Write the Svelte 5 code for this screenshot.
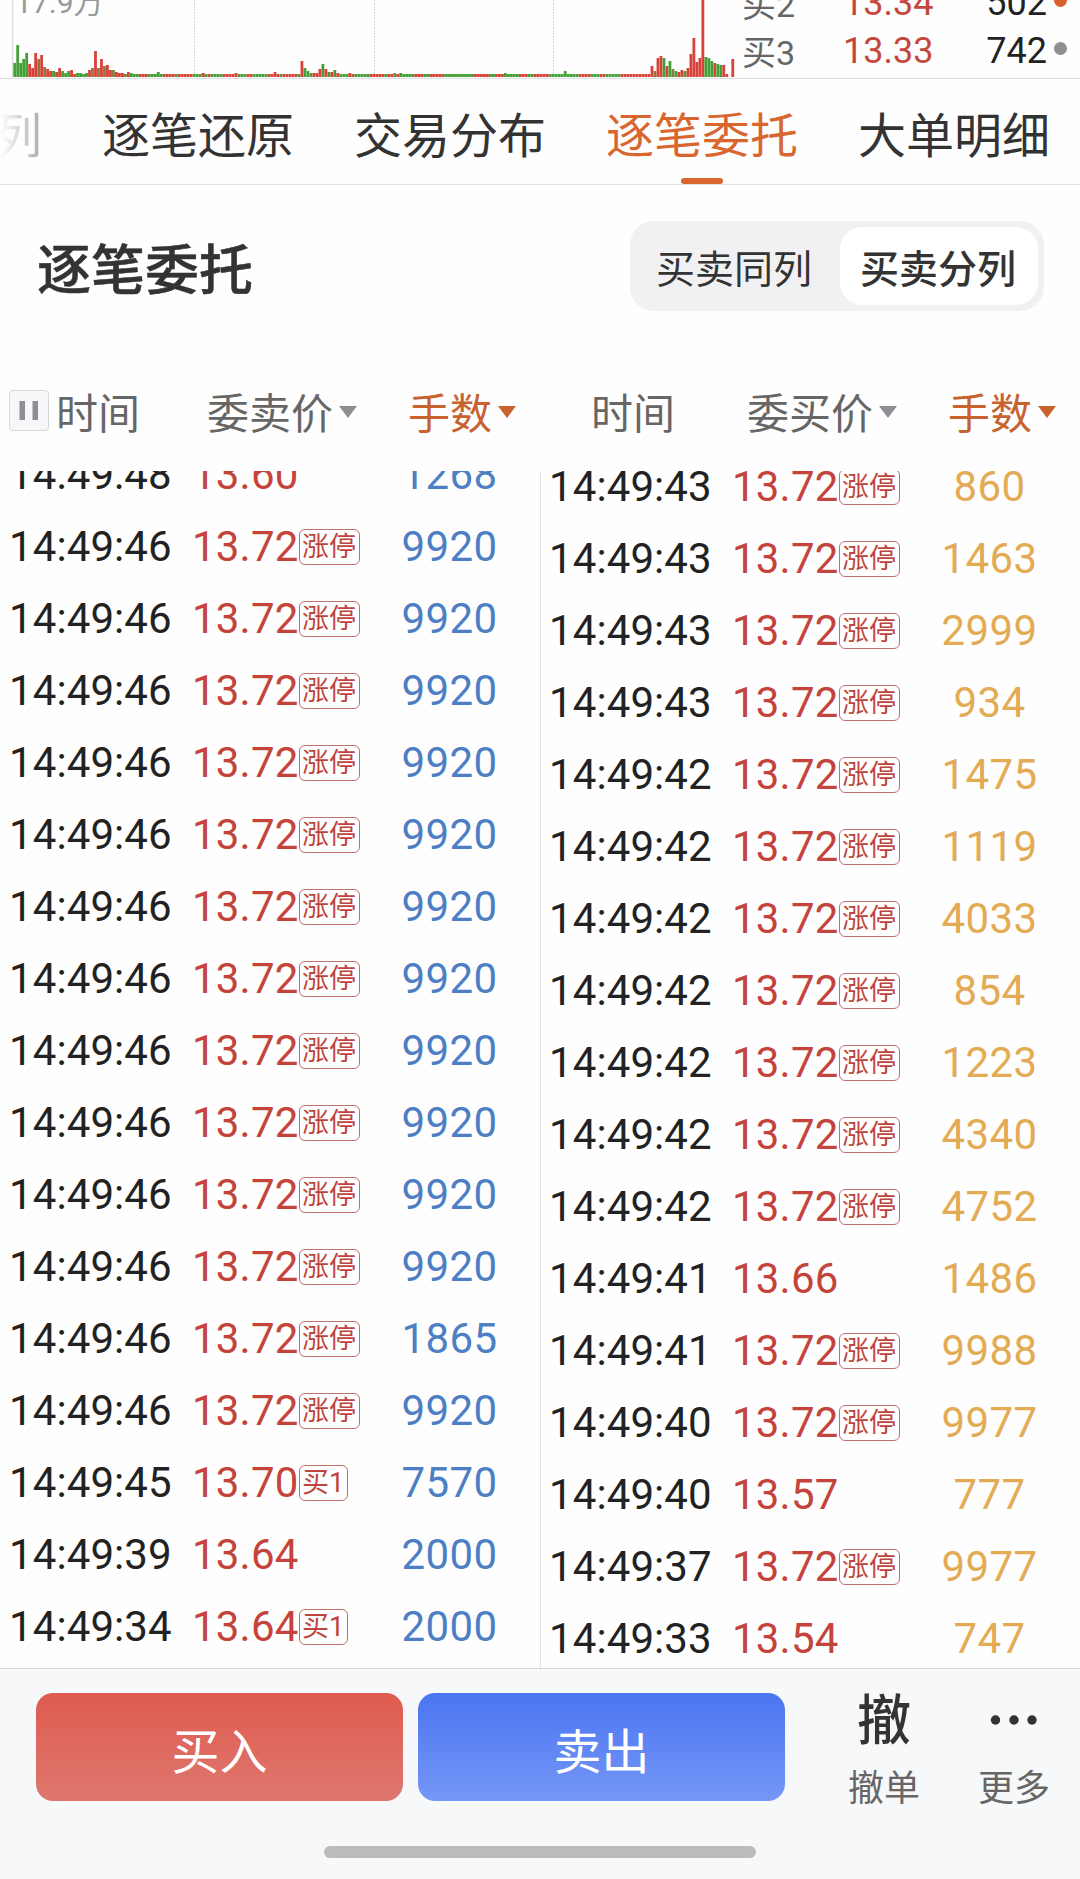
<script>
  // Volume bars as [height, colour] pairs; o marks overlapping buy/sell volume.
  const head = '14g 32g 14g 18g 24g 13r 9r 24r 18o 22r 10o 8r 6r 6g 5r 9r 6g 4g 6g 7r 3r 4g 4g 3g 4g 7r 9o 26r 9o 18r 11o 12r 7r 7o 5r 4r 4r 3o 5r 4g';
  const tail = '11r 6o 19r 21r 19g 11r 16g 8o 6g 5r 7r 6g 9r 23r 39r 15r 19r 78r 20g 19g 16g 14r 13g 12g 12r 3r 0r 18r';
  const parse = (s) => s.split(' ').map((b) => ({ h: parseInt(b), c: b.slice(-1) }));
  const spikes = { 48: [5, 'g'], 63: [4, 'r'], 74: [4, 'r'], 87: [5, 'r'], 96: [16, 'r'], 97: [9, 'g'], 98: [6, 'g'], 99: [4, 'g'], 100: [4, 'r'], 101: [4, 'r'], 102: [8, 'r'], 103: [13, 'g'], 104: [8, 'r'], 105: [5, 'g'], 106: [5, 'r'], 107: [7, 'g'], 108: [4, 'r'], 112: [4, 'r'], 127: [4, 'g'], 129: [4, 'g'], 164: [4, 'g'], 184: [6, 'g'] };
  const mid = Array.from({ length: 173 }, (_, k) => {
    const i = k + 40;
    const s = spikes[i];
    return s ? { h: s[0], c: s[1] } : { h: 3, c: Math.sin(i * 0.9) + Math.sin(i * 0.37) > 0 ? 'r' : 'g' };
  });
  const bars = [...parse(head), ...mid, ...parse(tail)];
  const fills = { r: '#d9423a', g: '#43a035', o: '#8b7a3a' };

  const tabs = ['逐笔还原', '交易分布', '逐笔委托', '大单明细'];
  const up = '涨停';
  const sells = [
    ['14:49:48', '13.60', '', '1268'],
    ...Array.from({ length: 11 }, () => ['14:49:46', '13.72', up, '9920']),
    ['14:49:46', '13.72', up, '1865'],
    ['14:49:46', '13.72', up, '9920'],
    ['14:49:45', '13.70', '买1', '7570'],
    ['14:49:39', '13.64', '', '2000'],
    ['14:49:34', '13.64', '买1', '2000'],
  ];
  const buys = [
    ['43', '72', '860'], ['43', '72', '1463'], ['43', '72', '2999'], ['43', '72', '934'],
    ['42', '72', '1475'], ['42', '72', '1119'], ['42', '72', '4033'], ['42', '72', '854'],
    ['42', '72', '1223'], ['42', '72', '4340'], ['42', '72', '4752'], ['41', '66', '1486'],
    ['41', '72', '9988'], ['40', '72', '9977'], ['40', '57', '777'], ['37', '72', '9977'],
    ['33', '54', '747'],
  ].map(([s, p, n]) => ['14:49:' + s, '13.' + p, p === '72' ? up : '', n]);
</script>

{#snippet rows(list)}
  {#each list as [time, price, tag, lots]}
    <div class="row">
      <span class="time">{time}</span>
      <span class="price">{price}{#if tag}<i class="tag">{tag}</i>{/if}</span>
      <span class="lots">{lots}</span>
    </div>
  {/each}
{/snippet}

{#snippet arrow()}
  <svg class="arrow" width="18" height="12" viewBox="0 0 18 12"><path d="M0 0H18L9 12Z" fill="currentColor" /></svg>
{/snippet}

<main>
  <section class="quote">
    <div class="chart">
      <svg width="735" height="78" viewBox="0 0 735 78">
        <path d="M12.5 0V77.5" stroke="#dedfe0" stroke-width="1.5" />
        <path d="M194.5 0V77M374.5 0V77M553.5 0V77" stroke="#c8c8c8" stroke-dasharray="1.5 1.5" />
        {#each bars as b, i}
          <rect x={13.3 + i * 2.992} y={77 - b.h} width="2.8" height={b.h} fill={fills[b.c]} />
        {/each}
      </svg>
      <span class="volume">17.9万</span>
    </div>
    <div class="book">
      <div class="level"><span class="name">买2</span><span class="bid">13.34</span><span class="qty">502</span><b class="dot hot"></b></div>
      <div class="level"><span class="name">买3</span><span class="bid">13.33</span><span class="qty">742</span><b class="dot"></b></div>
    </div>
  </section>

  <nav>
    <span class="faded">列</span>
    {#each tabs as tab}
      <span class="tab" class:active={tab === '逐笔委托'}>{tab}</span>
    {/each}
  </nav>

  <header>
    <h1>逐笔委托</h1>
    <div class="switch"><span class="opt">买卖同列</span><span class="opt on">买卖分列</span></div>
  </header>

  <div class="heads">
    <div class="head">
      <span class="h-time first">
        <svg class="pause" width="40" height="41" viewBox="0 0 40 41"><rect x=".5" y=".5" width="39" height="40" rx="3.5" fill="#f6f7f9" stroke="#d6d7d9" /><path d="M10.500 11h5.500v19h-5.500zM23.500 11h5.500v19h-5.500z" fill="#8e8e93" /></svg>
        时间
      </span>
      <span class="h-price">委卖价{@render arrow()}</span>
      <span class="h-lots">手数{@render arrow()}</span>
    </div>
    <div class="head">
      <span class="h-time">时间</span>
      <span class="h-price">委买价{@render arrow()}</span>
      <span class="h-lots">手数{@render arrow()}</span>
    </div>
  </div>

  <div class="lists">
    <div class="list sell">{@render rows(sells)}</div>
    <div class="list buy">{@render rows(buys)}</div>
  </div>

  <footer>
    <div class="actions">
      <button class="b-buy">买入</button>
      <button class="b-sell">卖出</button>
      <div class="tool cancel"><span class="glyph">撤</span><span>撤单</span></div>
      <div class="tool more">
        <span class="glyph"><svg width="48" height="12" viewBox="0 0 48 12"><g fill="#333"><circle cx="5.500" cy="6" r="4.700" /><circle cx="24" cy="6" r="4.700" /><circle cx="42" cy="6" r="4.700" /></g></svg></span>
        <span>更多</span>
      </div>
    </div>
    <div class="home"></div>
  </footer>
</main>

<style>
  :global(body) { margin: 0; background: #fefefe; }
  main {
    width: 1080px; height: 1879px; overflow: hidden; display: flex; flex-direction: column;
    font-family: Roboto, "Noto Sans CJK SC", sans-serif; color: #333; background: #fefefe;
  }
  main * { box-sizing: border-box; }
  span { white-space: nowrap; }
  .quote { height: 79px; flex: none; display: flex; border-bottom: 1px solid #dddedf; overflow: hidden; }
  .chart { width: 740px; position: relative; }
  .chart svg { display: block; }
  .volume { position: absolute; left: 15px; top: -14px; font-size: 30px; line-height: 34px; color: #999; }
  .book { width: 340px; height: 96px; margin-top: -21px; font-size: 36px; }
  .level { height: 48px; line-height: 48px; display: grid; grid-template-columns: 101px 100px 104px 34px; padding-left: 2px; align-items: center; }
  .name { color: #666; font-size: 34px; padding-top: 2px; height: 48px; }
  .bid { color: #c4473e; }
  .qty { color: #222; text-align: right; }
  .dot { width: 13px; height: 13px; border-radius: 50%; background: #8e8e93; margin: -6px 0 0 7px; }
  .hot { background: #d8622e; }
  nav { height: 106px; flex: none; display: flex; gap: 60px; border-bottom: 1px solid #e0e1e2; font-size: 48px; line-height: 116px; }
  .faded { width: 42px; direction: rtl; overflow: hidden; background: linear-gradient(90deg, #fff, #aaa); background-clip: text; color: transparent; }
  .tab { width: 192px; height: 105px; flex: none; position: relative; }
  .active { color: #d9662f; }
  .active::after { content: ""; position: absolute; left: 75px; bottom: 0; width: 42px; height: 6px; border-radius: 3px; background: #d9662f; }
  header { height: 176px; flex: none; display: flex; justify-content: space-between; padding: 36px 36px 0 37px; }
  h1 { margin: 12px 0 0; font-size: 54px; line-height: 78px; font-weight: 500; height: 78px; -webkit-text-stroke: .5px #333; }
  .switch { width: 414px; height: 90px; border-radius: 24px; background: #f1f1f4; display: flex; padding: 6px; }
  .opt { width: 204px; height: 78px; padding-left: 20px; font-size: 39px; line-height: 86px; }
  .on { width: 198px; background: #fff; border-radius: 22px; font-weight: 500; }
  .heads { height: 110px; flex: none; display: flex; font-size: 42px; line-height: 108px; color: #666; }
  .head { width: 540px; display: grid; grid-template-columns: 207px 201px 132px; }
  .head span { display: flex; align-items: center; height: 108px; }
  .h-time { padding-left: 51px; }
  .h-time.first { padding-left: 9px; gap: 7px; }
  .pause { margin-top: -9px; }
  .arrow { margin: -7px 0 0 6px; color: #8e8e93; }
  .h-lots, .h-lots .arrow { color: #c8622f; }
  .lists { height: 1197px; flex: none; display: flex; overflow: hidden; font-size: 42px; letter-spacing: .35px; }
  .list { width: 540px; }
  .sell { margin-top: -32px; }
  .buy { border-left: 1px solid #e2e3e4; height: 1230px; }
  .buy .row { margin-left: -1px; }
  .buy .row:first-child { margin-top: -20px; }
  .row { height: 72px; line-height: 72px; display: grid; grid-template-columns: 183px 167px 181px; padding-left: 9px; width: 540px; }
  .time { color: #222; letter-spacing: .1px; }
  .price { color: #c4433a; display: flex; align-items: center; letter-spacing: .2px; }
  .tag { font-style: normal; font-size: 27px; line-height: 35px; height: 36px; padding: 0 2.5px; border: 1px solid #bd716b; border-radius: 6px; letter-spacing: 0; margin-left: 0; color: #bd453d; }
  .lots { text-align: center; color: #4c7fc4; }
  .buy .lots { color: #e2ab54; }
  footer { flex: 1; background: #f7f8fa; border-top: 1px solid #d4d5d8; padding: 24px 0 0 36px; }
  .actions { display: flex; height: 153px; }
  button { width: 367px; height: 108px; border: 0; border-radius: 17px; color: #fff; font: 48px Roboto, "Noto Sans CJK SC", sans-serif; padding: 1px 0 0; margin: 0 15px 0 0; flex: none; }
  .b-buy { background: linear-gradient(#df5b50, #de776e); }
  .b-sell { background: linear-gradient(#4a75f0, #7697f7); }
  .tool { display: flex; flex-direction: column; align-items: center; width: 130px; font-size: 36px; line-height: 50px; color: #666; flex: none; }
  .cancel { margin-left: 19px; }
  .glyph { height: 74px; margin-top: -3px; font-size: 54px; line-height: 64px; color: #333; font-weight: 500; }
  .more .glyph { line-height: 36px; }
  .home { width: 432px; height: 12px; border-radius: 6px; background: #babbbd; margin-left: 288px; }
</style>
